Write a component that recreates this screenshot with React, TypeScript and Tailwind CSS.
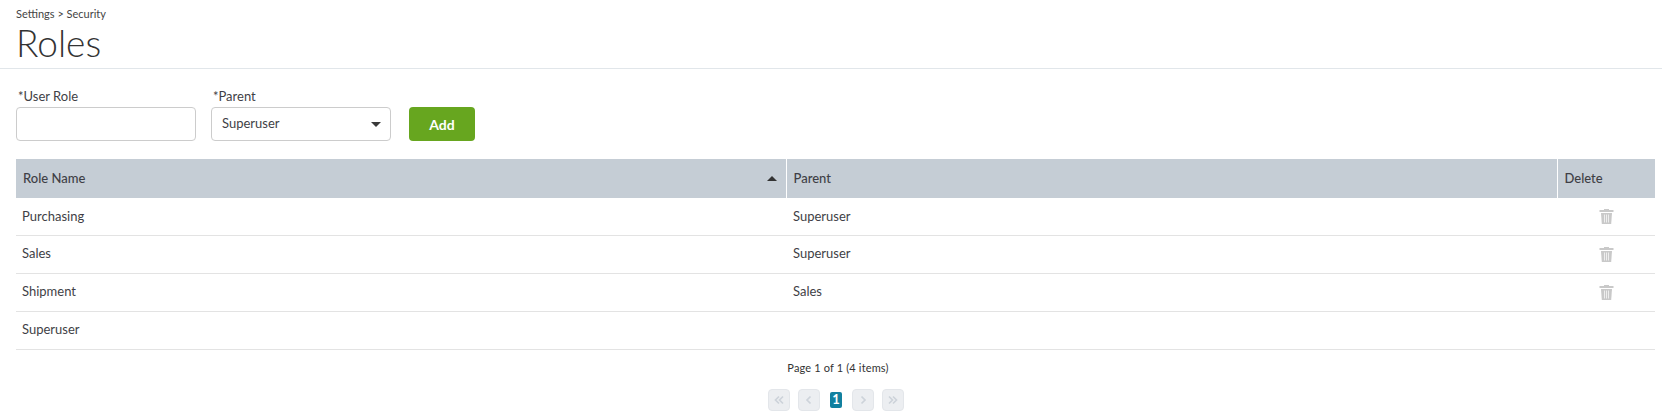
const roles = [
  { name: "Purchasing", parent: "Superuser", canDelete: true },
  { name: "Sales", parent: "Superuser", canDelete: true },
  { name: "Shipment", parent: "Sales", canDelete: true },
  { name: "Superuser", parent: "", canDelete: false },
];

function PageButton({ d }: { d: string }) {
  return (
    <button className="flex h-[22px] w-[22px] items-center justify-center rounded-[4px] border border-[#e3e6ea] bg-[#eceef1]">
      <svg width="12" height="12" viewBox="0 0 12 12" fill="none" stroke="#cdd3da" strokeWidth="1.7">
        <path d={d} />
      </svg>
    </button>
  );
}

function TrashIcon() {
  return (
    <svg className="mx-auto" width="15" height="16" viewBox="0 0 15 16">
      <path d="M5 2V1h5v1h4.500v2H.5V2z" fill="#c9c9c9" />
      <path d="M2 5h11l-.8 11H2.800z" fill="#c9c9c9" />
      <path d="M5 6.500h1V14.500H5zM7 6.500h1V14.500H7zM9 6.500h1V14.500H9z" fill="#eeeeee" />
    </svg>
  );
}

export default function App() {
  return (
    <div className="h-[413px] overflow-hidden bg-white font-['Lato',sans-serif] text-[#3f3f46]">
      <header className="h-[69px] border-b border-[#e1e6ea] pl-4 pt-[7px]">
        <div className="text-[11px] leading-[13px] text-[#444]">Settings &gt; Security</div>
        <h1 className="mt-[2px] text-[37px] leading-[42px] font-light text-[#333]">Roles</h1>
      </header>

      <main className="px-4 pr-1.5">
        <div className="flex items-end pt-[18px]">
          <label className="block w-[180px]">
            <span className="block pb-[2px] pl-0.5 text-[13px] leading-[18px]">*User Role</span>
            <input className="block h-[34px] w-full rounded-[4px] border border-[#cccccc] bg-white" />
          </label>
          <label className="ml-[15px] block w-[180px]">
            <span className="block pb-[2px] pl-0.5 text-[13px] leading-[18px]">*Parent</span>
            <div className="flex h-[34px] items-center justify-between rounded-[4px] border border-[#cccccc] pl-[10px] pr-[9px] text-[13px]">
              <span className="-mt-px">Superuser</span>
              <svg width="10" height="5" viewBox="0 0 10 5">
                <path d="M0 0h10L5 5z" fill="#3a3a3a" />
              </svg>
            </div>
          </label>
          <button className="ml-[18px] h-[34px] w-[66px] rounded-[4px] bg-[#67a61f] text-[14px] font-bold text-white">
            Add
          </button>
        </div>

        <table className="mt-[18px] w-[1639px] table-fixed border-collapse text-[13px]">
          <thead>
            <tr className="h-[39px] bg-[#c5cdd5] text-left">
              <th className="w-[770px] pl-[7px] pr-[9px] font-medium">
                <div className="flex items-center justify-between">
                  <span>Role Name</span>
                  <svg width="10" height="5" viewBox="0 0 10 5">
                    <path d="M5 0l5 5H0z" fill="#333" />
                  </svg>
                </div>
              </th>
              <th className="w-[771px] border-l border-white pl-[7px] font-medium">Parent</th>
              <th className="border-l border-white pl-[7px] font-medium">Delete</th>
            </tr>
          </thead>
          <tbody>
            {roles.map((role) => (
              <tr key={role.name} className="h-[38px] border-b border-[#e3e3e3] first:h-[37px]">
                <td className="pl-[6px]">{role.name}</td>
                <td className="pl-[7px]">{role.parent}</td>
                <td>{role.canDelete && <TrashIcon />}</td>
              </tr>
            ))}
          </tbody>
        </table>

        <div className="mt-[11px] pl-1 text-center text-[11px] leading-[14px] tracking-[0.15px] text-[#333]">
          Page 1 of 1 (4 items)
        </div>

        <nav className="mt-[14px] flex items-center justify-center gap-2">
          <PageButton d="M6 2.500 2.500 6 6 9.500M10 2.500 6.500 6 10 9.500" />
          <PageButton d="M7.500 2.500 4 6l3.500 3.500" />
          <span className="mx-0.5 flex h-[16px] w-[12px] items-center justify-center rounded-[2px] bg-[#11809f] text-[13px] font-bold text-white">
            1
          </span>
          <PageButton d="M4.500 2.500 8 6l-3.500 3.500" />
          <PageButton d="M2 2.500 5.500 6 2 9.500M6 2.500 9.500 6 6 9.500" />
        </nav>
      </main>
    </div>
  );
}
